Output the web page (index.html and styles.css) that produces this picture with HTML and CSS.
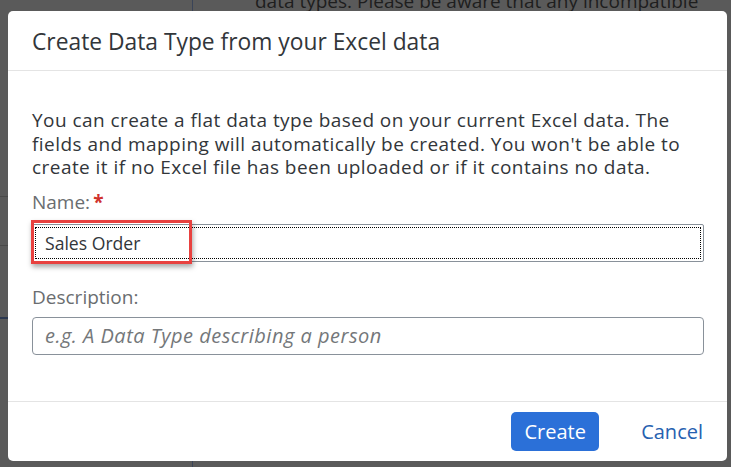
FILE: index.html
```html
<!DOCTYPE html>
<html lang="en">
<head>
<meta charset="utf-8">
<title>Create Data Type</title>
<link rel="stylesheet" href="styles.css">
</head>
<body>
<div class="page">
  <aside class="side">
    <div class="side-row r1"></div>
    <div class="side-row r2"></div>
    <div class="side-row r3"></div>
  </aside>
  <main class="main">
    <p class="bg-text">data types. Please be aware that any incompatible</p>
  </main>
</div>

<div class="dialog" role="dialog" aria-labelledby="dlg-title">
  <header class="dlg-header">
    <h1 id="dlg-title" class="dlg-title">Create Data Type from your Excel data</h1>
  </header>
  <section class="dlg-body">
    <p class="intro">You can create a flat data type based on your current Excel data. The fields and mapping will automatically be created. You won't be able to create it if no Excel file has been uploaded or if it contains no data.</p>
    <label class="label" for="name">Name:<span class="req">*</span></label>
    <div class="field">
      <div class="input focused"><span class="value">Sales Order</span></div>
      <div class="highlight"></div>
    </div>
    <label class="label label-desc" for="desc">Description:</label>
    <div class="input"><span class="placeholder">e.g. A Data Type describing a person</span></div>
  </section>
  <footer class="dlg-footer">
    <button class="btn btn-primary">Create</button>
    <button class="btn btn-link">Cancel</button>
  </footer>
</div>
</body>
</html>
```

FILE: styles.css
```css
html, body {
  margin: 0;
  padding: 0;
  height: 100%;
}
body {
  background: #5a5a5a;
  font-family: "Open Sans", "Liberation Sans", Arial, sans-serif;
  overflow: hidden;
}

/* dimmed page behind the dialog */
.page {
  display: grid;
  grid-template-columns: 193px 1fr;
  height: 467px;
}
.side {
  border-right: 1px solid #3a4458;
  display: flex;
  flex-direction: column;
}
.side-row {
  border-bottom: 1px solid #4a4a4a;
}
.r1 { height: 196px; }
.r2 { height: 48px; }
.r3 { height: 71px; border-bottom: 2px solid #2c3850; }
.main { position: relative; }
.bg-text {
  margin: -10px 0 0 62px;
  font-size: 19px;
  line-height: 22px;
  color: #1e1e1e;
  white-space: nowrap;
}

/* dialog */
.dialog {
  position: absolute;
  left: 8px;
  top: 11px;
  width: 719px;
  height: 450px;
  background: #fff;
  border-radius: 5px;
  display: flex;
  flex-direction: column;
}
.dlg-header {
  height: 59px;
  border-bottom: 1px solid #e4e4e4;
  display: flex;
  align-items: center;
  padding: 0 24px 0 24px;
}
.dlg-title {
  margin: 0;
  font-weight: normal;
  font-size: 22.8px;
  line-height: 28px;
  color: #32363a;
  padding-top: 3px;
}
.dlg-body {
  flex: 1;
  padding: 38px 23px 0 24px;
  display: flex;
  flex-direction: column;
}
.intro {
  margin: 0;
  font-size: 19px;
  line-height: 23.5px;
  letter-spacing: 0.45px;
  color: #32363a;
}
.label {
  margin-top: 10px;
  font-size: 19px;
  line-height: 24px;
  color: #6a6d70;
}
.label-desc { margin-top: 23px; }
.req {
  color: #d0312d;
  margin-left: 3px;
  font-weight: bold;
}
.field {
  position: relative;
  margin-top: 10px;
}
.label-desc + .input { margin-top: 8px; }
.input {
  height: 38px;
  box-sizing: border-box;
  border: 1px solid #89919a;
  border-radius: 4px;
  background: #fff;
  display: flex;
  align-items: center;
  padding: 0 12px;
  font-size: 17.6px;
  position: relative;
}
.input.focused {
  border-radius: 2px;
  outline: 1px dotted #000;
  outline-offset: -4px;
}
.value { color: #32363a; }
.placeholder {
  color: #74777a;
  font-size: 20px;
  font-style: italic;
  letter-spacing: 0.5px;
}
.highlight {
  position: absolute;
  left: -1px;
  top: -4px;
  width: 161px;
  height: 44px;
  box-sizing: border-box;
  border: 3px solid #e8413f;
  box-shadow: 1px 3px 5px rgba(0, 0, 0, 0.35);
  pointer-events: none;
}

.dlg-footer {
  height: 59px;
  border-top: 1px solid #e4e4e4;
  display: flex;
  justify-content: flex-end;
  align-items: center;
  gap: 30px;
  padding: 0 12px 0 0;
}
.btn {
  font-family: inherit;
  font-size: 20px;
  height: 39px;
  border-radius: 5px;
  border: none;
  cursor: pointer;
}
.btn-primary {
  background: #2b70d8;
  color: #fff;
  width: 88px;
  padding: 0;
}
.btn-link {
  background: transparent;
  color: #2661b0;
  padding: 0 12px;
}
```
